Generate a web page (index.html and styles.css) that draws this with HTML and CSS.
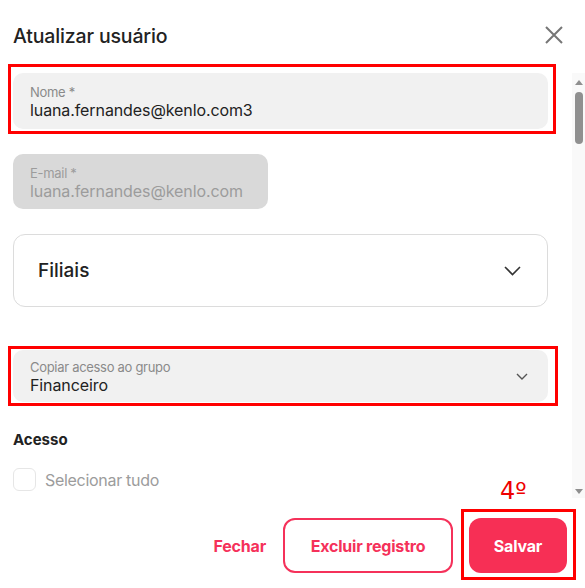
FILE: index.html
```html
<!DOCTYPE html>
<html lang="pt-BR">
<head>
<meta charset="utf-8">
<title>Atualizar usuário</title>
<link rel="stylesheet" href="styles.css">
</head>
<body>
<div class="modal">
  <header class="modal-header">
    <h1 class="modal-title">Atualizar usuário</h1>
    <button class="close-btn" aria-label="Fechar">
      <svg width="18" height="18" viewBox="0 0 18 18"><path d="M1 1L17 17M17 1L1 17" stroke="#767676" stroke-width="2" fill="none"/></svg>
    </button>
  </header>

  <div class="modal-body">
    <div class="content">
      <div class="field field-filled annotated">
        <span class="field-label">Nome *</span>
        <span class="field-value">luana.fernandes@kenlo.com3</span>
        <span class="mark mark-nome"></span>
      </div>

      <div class="field field-disabled">
        <span class="field-label">E-mail *</span>
        <span class="field-value">luana.fernandes@kenlo.com</span>
      </div>

      <div class="select-outline">
        <span class="select-text">Filiais</span>
        <svg width="17" height="10" viewBox="0 0 17 10"><path d="M1 1L8.5 8.5L16 1" stroke="#333" stroke-width="1.6" fill="none"/></svg>
      </div>

      <div class="field field-filled field-select annotated">
        <div class="field-col">
          <span class="field-label">Copiar acesso ao grupo</span>
          <span class="field-value">Financeiro</span>
        </div>
        <svg width="12" height="7" viewBox="0 0 12 7"><path d="M1 1L6 6L11 1" stroke="#555" stroke-width="1.4" fill="none"/></svg>
        <span class="mark mark-copiar"></span>
      </div>

      <h2 class="section-title">Acesso</h2>
      <label class="check-row">
        <span class="checkbox"></span>
        <span class="check-text">Selecionar tudo</span>
      </label>
    </div>

    <div class="scrollbar">
      <span class="arrow arrow-up"></span>
      <span class="thumb"></span>
      <span class="track-fill"></span>
      <span class="arrow arrow-down"></span>
    </div>
  </div>

  <footer class="modal-footer">
    <button class="btn-text">Fechar</button>
    <button class="btn-outline">Excluir registro</button>
    <div class="annotated">
      <button class="btn-primary">Salvar</button>
      <span class="mark mark-salvar"></span>
      <span class="step">4º</span>
    </div>
  </footer>
</div>
</body>
</html>
```

FILE: styles.css
```css
* { box-sizing: border-box; }

html, body {
  margin: 0;
  padding: 0;
  background: #ffffff;
}

body {
  font-family: Inter, "Noto Sans", "Liberation Sans", sans-serif;
  color: #222222;
  width: 585px;
  height: 588px;
  overflow: hidden;
}

.modal {
  display: flex;
  flex-direction: column;
}

.modal-header {
  height: 73px;
  display: flex;
  justify-content: space-between;
  align-items: flex-start;
  padding: 24px 22px 0 13px;
}

.modal-title {
  margin: 0;
  font-size: 19.5px;
  line-height: 24px;
  font-weight: 500;
  color: #222222;
  letter-spacing: -0.15px;
}

.close-btn {
  border: 0;
  background: none;
  padding: 0;
  margin-top: 2px;
  width: 18px;
  height: 18px;
  display: flex;
}

.modal-body {
  display: flex;
  padding-left: 13px;
  height: 425px;
}

.content {
  width: 535px;
  display: flex;
  flex-direction: column;
}

.annotated { position: relative; }

.mark {
  position: absolute;
  border: 3px solid #ff0000;
  pointer-events: none;
}

.mark-nome { left: -5px; right: -8px; top: -9px; bottom: -5px; }
.mark-copiar { left: -5px; right: -10px; top: -4px; bottom: -4px; }
.mark-salvar { left: -8px; right: -9px; top: -9px; bottom: -7px; }

.field {
  border-radius: 10px;
  padding: 11px 17px 0 17px;
  display: flex;
  flex-direction: column;
}

.field-filled {
  background: #f1f1f1;
  height: 56px;
}

.field-disabled {
  background: #d9d9d9;
  width: 255px;
  height: 55px;
  margin-top: 25px;
}

.field-label {
  font-size: 13px;
  line-height: 16px;
  color: #8a8a8a;
  letter-spacing: -0.3px;
}

.field-value {
  font-size: 16px;
  line-height: 20px;
  color: #222222;
  letter-spacing: -0.1px;
}

.field-disabled .field-label,
.field-disabled .field-value {
  color: #9c9c9c;
}

.select-outline {
  margin-top: 25px;
  height: 73px;
  border: 1px solid #dcdcdc;
  border-radius: 12px;
  display: flex;
  align-items: center;
  justify-content: space-between;
  padding: 0 26px 0 24px;
}

.select-text {
  font-size: 19px;
  font-weight: 500;
  color: #222222;
}

.field-select {
  margin-top: 43px;
  height: 52px;
  flex-direction: row;
  align-items: center;
  justify-content: space-between;
  padding: 0 20px 0 17px;
}

.field-col {
  display: flex;
  flex-direction: column;
  padding-top: 2px;
}

.section-title {
  margin: 28px 0 0 0;
  font-size: 15px;
  line-height: 20px;
  font-weight: 700;
  color: #222222;
}

.check-row {
  display: flex;
  align-items: center;
  gap: 9px;
  margin-top: 18px;
}

.checkbox {
  width: 23px;
  height: 23px;
  border: 1px solid #e6e6e6;
  border-radius: 6px;
  background: #fff;
}

.check-text {
  font-size: 16px;
  color: #9c9c9c;
  letter-spacing: -0.3px;
}

.scrollbar {
  margin-left: 24px;
  width: 13px;
  height: 425px;
  background: #f9f9f9;
  display: flex;
  flex-direction: column;
  align-items: center;
  padding: 7px 0 4px;
}

.arrow {
  width: 0;
  height: 0;
  border-left: 4px solid transparent;
  border-right: 4px solid transparent;
}

.arrow-up { border-bottom: 5px solid #8f8f8f; }
.arrow-down { border-top: 5px solid #8f8f8f; }

.thumb {
  margin-top: 7px;
  width: 8px;
  height: 52px;
  border-radius: 4px;
  background: #909090;
}

.track-fill { flex: 1; }

.modal-footer {
  display: flex;
  justify-content: flex-end;
  align-items: center;
  padding: 20px 18px 0 0;
  gap: 16px;
}

.btn-text,
.btn-outline,
.btn-primary {
  font-family: Inter, "Noto Sans", "Liberation Sans", sans-serif;
  font-size: 16px;
  font-weight: 700;
  letter-spacing: -0.2px;
  cursor: pointer;
}

.btn-text {
  border: 0;
  background: none;
  color: #f5315a;
  padding: 0;
  margin-right: 1px;
}

.btn-outline {
  width: 170px;
  height: 55px;
  border: 2px solid #f5315a;
  border-radius: 12px;
  background: #fff;
  color: #f5315a;
}

.btn-primary {
  width: 98px;
  height: 55px;
  border: 0;
  border-radius: 12px;
  background: #f72f55;
  color: #ffffff;
  display: block;
}

.step {
  position: absolute;
  left: 31px;
  top: -41px;
  font-family: "DejaVu Sans", sans-serif;
  font-size: 24px;
  color: #ee0000;
  line-height: 28px;
}
```
